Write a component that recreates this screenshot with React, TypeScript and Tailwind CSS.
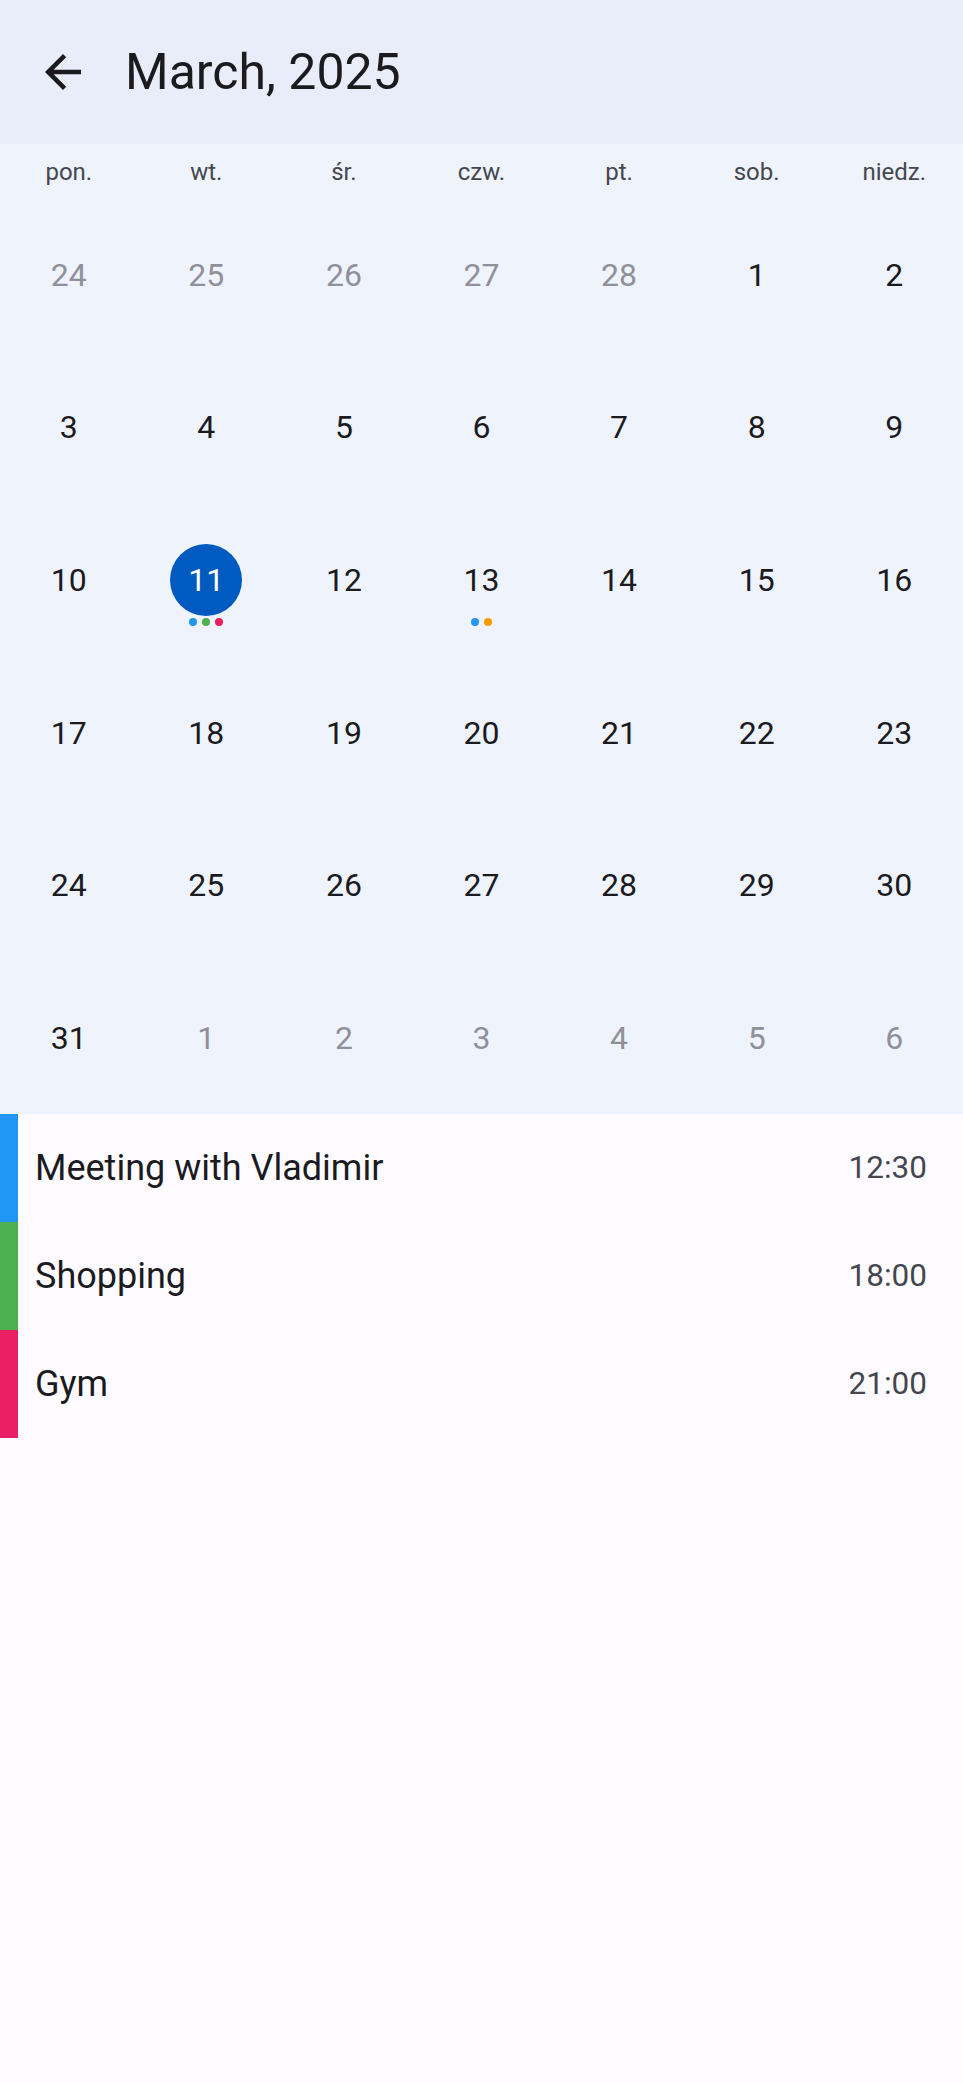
import React from "react";

type Day = { n: number; muted?: boolean; today?: boolean; dots?: string[] };

const weekdays = ["pon.", "wt.", "śr.", "czw.", "pt.", "sob.", "niedz."];

const BLUE = "bg-[#2196F3]";
const GREEN = "bg-[#4CAF50]";
const PINK = "bg-[#E91E63]";
const ORANGE = "bg-[#FF9800]";

function buildDays(): Day[] {
  const days: Day[] = [];
  for (let n = 24; n <= 28; n++) days.push({ n, muted: true });
  for (let n = 1; n <= 31; n++) {
    const d: Day = { n };
    if (n === 11) {
      d.today = true;
      d.dots = [BLUE, GREEN, PINK];
    }
    if (n === 13) d.dots = [BLUE, ORANGE];
    days.push(d);
  }
  for (let n = 1; n <= 6; n++) days.push({ n, muted: true });
  return days;
}

const events = [
  { title: "Meeting with Vladimir", time: "12:30", color: BLUE },
  { title: "Shopping", time: "18:00", color: GREEN },
  { title: "Gym", time: "21:00", color: PINK },
];

function DayCell({ day }: { day: Day }) {
  return (
    <div className="relative flex items-center justify-center">
      {day.today ? (
        <div className="w-[72px] h-[72px] rounded-full bg-[#005ABF] flex items-center justify-center text-white pt-[1px]">
          {day.n}
        </div>
      ) : (
        <span className={`pt-[1px] ${day.muted ? "text-[#8F9099]" : "text-[#1B1B1F]"}`}>{day.n}</span>
      )}
      {day.dots && (
        <div className="absolute left-0 right-0 top-1/2 mt-[38px] flex justify-center gap-[5px]">
          {day.dots.map((c, i) => (
            <span key={i} className={`w-[8px] h-[8px] rounded-full ${c}`} />
          ))}
        </div>
      )}
    </div>
  );
}

export default function App() {
  const days = buildDays();

  return (
    <div className="min-h-screen bg-[#FDFBFF] font-['Roboto',sans-serif] text-[#1B1B1F]">
      <header className="h-[144px] bg-[#E9EDF9] flex items-center pl-[36px]">
        <svg width="54" height="54" viewBox="0 -960 960 960" fill="#1B1B1F">
          <path d="M313-440l224 224-57 56-320-320 320-320 57 56-224 224h487v80H313z" />
        </svg>
        <h1 className="ml-[35px] text-[50px] leading-none">March, 2025</h1>
      </header>

      <section className="h-[970px] bg-[#EFF3FC] flex flex-col">
        <div className="h-[54px] pt-[2px] grid grid-cols-7 items-center text-[24px] text-[#44474F]">
          {weekdays.map((w) => (
            <div key={w} className="text-center">
              {w}
            </div>
          ))}
        </div>
        <div className="flex-1 grid grid-cols-7 grid-rows-6 text-[32px]">
          {days.map((d, i) => (
            <DayCell key={i} day={d} />
          ))}
        </div>
      </section>

      <ul>
        {events.map((e) => (
          <li key={e.title} className="h-[108px] flex items-stretch">
            <div className={`w-[18px] ${e.color}`} />
            <div className="flex-1 flex items-center justify-between pl-[17px] pr-[36px]">
              <span className="text-[36px] text-[#1B1B1F]">{e.title}</span>
              <span className="text-[31.5px] text-[#44474E]">{e.time}</span>
            </div>
          </li>
        ))}
      </ul>
    </div>
  );
}
